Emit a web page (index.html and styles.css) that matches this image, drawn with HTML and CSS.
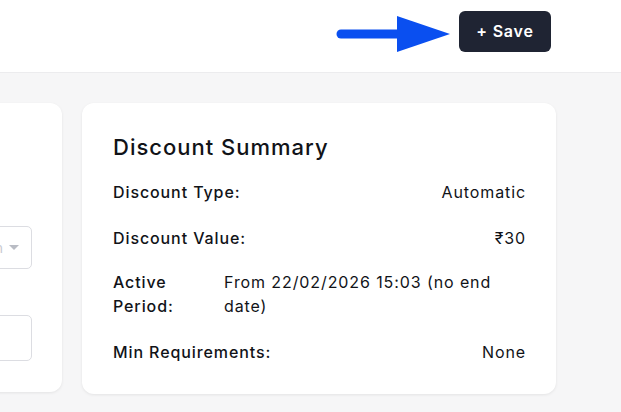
FILE: index.html
```html
<!DOCTYPE html>
<html>
<head>
<meta charset="utf-8">
<link rel="stylesheet" href="styles.css">
</head>
<body>
<header class="topbar">
  <svg class="arrow" width="120" height="40" viewBox="0 0 120 40" aria-hidden="true">
    <line x1="6" y1="19" x2="68" y2="19" stroke="#0a4ff0" stroke-width="9" stroke-linecap="round"/>
    <polygon points="62,1 115,19 62,37" fill="#0a4ff0"/>
  </svg>
  <button class="save-btn">+ Save</button>
</header>
<main class="content">
  <section class="card form-card">
    <div class="select-box"><span class="select-text">n</span><span class="caret"></span></div>
    <div class="input-box"></div>
  </section>
  <section class="card summary">
    <h2 class="summary-title">Discount Summary</h2>
    <div class="row">
      <span class="label">Discount Type:</span>
      <span class="value">Automatic</span>
    </div>
    <div class="row row-before-period">
      <span class="label">Discount Value:</span>
      <span class="value">₹30</span>
    </div>
    <div class="row">
      <span class="label label-narrow">Active Period:</span>
      <span class="value value-left">From 22/02/2026 15:03 (no end date)</span>
    </div>
    <div class="row">
      <span class="label">Min Requirements:</span>
      <span class="value">None</span>
    </div>
  </section>
</main>
</body>
</html>
```

FILE: styles.css
```css
* { box-sizing: border-box; }
html, body { margin: 0; padding: 0; }
body {
  width: 621px;
  height: 412px;
  overflow: hidden;
  background: #f6f6f7;
  font-family: Inter, "Liberation Sans", sans-serif;
  color: #111318;
}
.topbar {
  height: 73px;
  background: #ffffff;
  border-bottom: 1px solid #ececee;
  display: flex;
  align-items: center;
  justify-content: flex-end;
  padding-right: 70px;
  gap: 4px;
}
.arrow { display: block; margin-top: -2px; }
.save-btn {
  width: 92px;
  height: 41px;
  margin-top: -10px;
  background: #1f2433;
  color: #ffffff;
  border: 0;
  border-radius: 6px;
  font-family: inherit;
  font-size: 16px;
  font-weight: 600;
  letter-spacing: 0.8px;
}
.content {
  display: flex;
  gap: 20px;
  padding-top: 30px;
  margin-left: -200px;
}
.card {
  background: #ffffff;
  border-radius: 12px;
  box-shadow: 0 1px 3px rgba(0,0,0,0.08);
}
.form-card {
  width: 262px;
  height: 289px;
  padding-left: 140px;
  padding-top: 123px;
  display: flex;
  flex-direction: column;
}
.select-box {
  width: 92px;
  height: 43px;
  border: 1px solid #dcdde2;
  border-radius: 5px;
  display: flex;
  align-items: center;
  justify-content: flex-end;
  padding-right: 12px;
  gap: 6px;
}
.select-text { color: #c9cbd1; font-size: 14px; }
.caret {
  width: 0; height: 0;
  border-left: 5px solid transparent;
  border-right: 5px solid transparent;
  border-top: 5px solid #b9bcc4;
}
.input-box {
  width: 92px;
  height: 46px;
  margin-top: 46px;
  border: 1px solid #dcdde2;
  border-radius: 5px;
}
.summary {
  width: 474px;
  height: 291px;
  padding: 28px 30px 0 31px;
}
.summary-title {
  margin: 0 0 17px 0;
  font-size: 22px;
  font-weight: 500;
  line-height: 32px;
  letter-spacing: 1px;
}
.row {
  display: flex;
  justify-content: space-between;
  font-size: 16px;
  line-height: 24px;
  margin-bottom: 22px;
  letter-spacing: 0.9px;
}
.row-before-period { margin-bottom: 20px; }
.label { font-weight: 500; }
.value { font-weight: 400; }
.label-narrow { width: 95px; flex-shrink: 0; }
.value-left { flex: 1; margin-left: 16px; }
```
